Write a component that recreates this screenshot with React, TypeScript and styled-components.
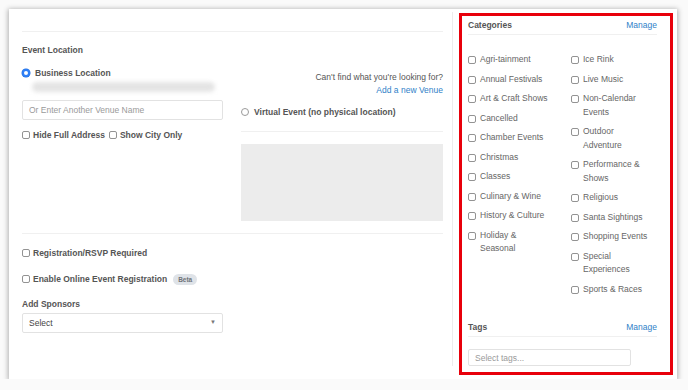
import styled, { createGlobalStyle } from 'styled-components';

const GlobalStyle = createGlobalStyle`
  html, body {
    margin: 0;
    padding: 0;
    background: #fafafa;
  }
  body {
    font-family: "Liberation Sans", Arial, Helvetica, sans-serif;
    font-size: 8.5px;
    color: #555;
  }
  * {
    box-sizing: border-box;
  }
`;

const Card = styled.div`
  margin: 9px 0 0 9px;
  width: 668px;
  height: 370px;
  background: #fff;
  box-shadow: 0 1px 5px 1px rgba(0, 0, 0, 0.3);
  display: flex;
`;

const LeftCol = styled.div`
  width: 444px;
  margin: 3px 0 13px;
  padding: 19px 9px 0 13px;
  border-right: 1px solid #ececec;
`;

const RightCol = styled.div`
  flex: 1;
  padding: 4px 4px 4px 6px;
  display: flex;
`;

const Highlight = styled.div`
  flex: 1;
  border: 3px solid #e8000b;
  padding: 0 13px 0 6px;
  display: flex;
  flex-direction: column;
`;

const Divider = styled.div<{ $top?: number }>`
  height: 1px;
  background: #f0f0f0;
  margin-top: ${(p) => p.$top ?? 0}px;
`;

const Heading = styled.div<{ $top?: number }>`
  margin-top: ${(p) => p.$top ?? 0}px;
  line-height: 12px;
  font-weight: bold;
  color: #555;
`;

const Split = styled.div`
  display: grid;
  grid-template-columns: 201px 202px;
  column-gap: 18px;
`;

const Stack = styled.div`
  display: flex;
  flex-direction: column;
`;

const OptionRow = styled.label<{ $top?: number; $gap?: number }>`
  display: flex;
  align-items: center;
  gap: ${(p) => p.$gap ?? 3}px;
  margin-top: ${(p) => p.$top ?? 0}px;
  line-height: 12px;
  font-weight: bold;
  color: #555;
`;

const Radio = styled.input.attrs({ type: 'radio' })`
  appearance: none;
  margin: 0;
  width: 8px;
  height: 8px;
  border-radius: 50%;
  border: 1px solid #9a9a9a;
  background: #fff;
  flex-shrink: 0;

  &:checked {
    border: 2.5px solid #2f7ff5;
    background: #fff;
    box-shadow: 0 0 0 0.5px #1f6fe0;
  }
`;

const Check = styled.input.attrs({ type: 'checkbox' })`
  appearance: none;
  margin: 0;
  width: 8px;
  height: 8px;
  border-radius: 2px;
  border: 1px solid #939393;
  background: #fff;
  flex-shrink: 0;
`;

const BlurredAddress = styled.div`
  margin: 3px 0 0 10px;
  width: 183px;
  height: 10px;
  background: #e4e4e4;
  border-radius: 5px;
  filter: blur(2px);
`;

const TextField = styled.div<{ $top?: number; $width?: string; $height: number }>`
  margin-top: ${(p) => p.$top ?? 0}px;
  width: ${(p) => p.$width ?? '100%'};
  height: ${(p) => p.$height}px;
  border: 1px solid #e2e2e2;
  border-radius: 2px;
  padding: 0 6px;
  display: flex;
  align-items: center;
  justify-content: space-between;
  color: #9a9a9a;
  background: #fff;
`;

const Value = styled.span`
  color: #444;
`;

const Caret = styled.span`
  font-size: 6px;
  color: #777;
  margin-top: -3px;
`;

const Hint = styled.div<{ $top?: number }>`
  margin-top: ${(p) => p.$top ?? 0}px;
  line-height: 12px;
  text-align: right;
  color: #555;
`;

const Link = styled.a`
  color: #2f7fc8;
  text-decoration: none;
  cursor: pointer;
`;

const MapBox = styled.div`
  margin-top: 12px;
  height: 77px;
  background: #ececec;
`;

const Badge = styled.span`
  margin-left: 3px;
  padding: 0 5px;
  height: 11px;
  line-height: 11px;
  border-radius: 6px;
  background: #dfe3e8;
  color: #6f7378;
  font-size: 6.5px;
  font-weight: bold;
`;

const PanelHeader = styled.div<{ $top?: number }>`
  margin-top: ${(p) => p.$top ?? 0}px;
  padding: 3px 0;
  line-height: 12px;
  display: flex;
  justify-content: space-between;
  border-bottom: 1px solid #f0f0f0;
`;

const PanelTitle = styled.span`
  font-weight: bold;
  color: #555;
`;

const CategoryGrid = styled.div`
  margin-top: 18px;
  display: grid;
  grid-template-columns: 103px 1fr;
  align-items: start;
`;

const CategoryList = styled.div`
  display: flex;
  flex-direction: column;
  gap: 6px;
`;

const CategoryItem = styled.label`
  display: flex;
  align-items: flex-start;
  gap: 4px;
  line-height: 13.5px;
  color: #666;
  white-space: pre-line;

  & > input {
    margin-top: 3px;
  }
`;

const colOne = [
  'Agri-tainment',
  'Annual Festivals',
  'Art & Craft Shows',
  'Cancelled',
  'Chamber Events',
  'Christmas',
  'Classes',
  'Culinary & Wine',
  'History & Culture',
  'Holiday &\nSeasonal',
];

const colTwo = [
  'Ice Rink',
  'Live Music',
  'Non-Calendar\nEvents',
  'Outdoor\nAdventure',
  'Performance &\nShows',
  'Religious',
  'Santa Sightings',
  'Shopping Events',
  'Special\nExperiences',
  'Sports & Races',
];

function Categories({ items }: { items: string[] }) {
  return (
    <CategoryList>
      {items.map((label) => (
        <CategoryItem key={label}>
          <Check />
          <span>{label}</span>
        </CategoryItem>
      ))}
    </CategoryList>
  );
}

export default function App() {
  return (
    <>
      <GlobalStyle />
      <Card>
        <LeftCol>
          <Divider />
          <Heading $top={12}>Event Location</Heading>

          <Split>
            <Stack>
              <OptionRow $top={11} $gap={5}>
                <Radio name="loc" defaultChecked />
                Business Location
              </OptionRow>
              <BlurredAddress />
              <TextField $top={8} $height={20}>
                Or Enter Another Venue Name
              </TextField>
              <OptionRow $top={9}>
                <Check />
                Hide Full Address
                <Check style={{ marginLeft: 1 }} />
                Show City Only
              </OptionRow>
            </Stack>

            <Stack>
              <Hint $top={15}>Can't find what you're looking for?</Hint>
              <Hint $top={1}>
                <Link>Add a new Venue</Link>
              </Hint>
              <OptionRow $top={10} $gap={5}>
                <Radio name="loc" />
                Virtual Event (no physical location)
              </OptionRow>
              <Divider $top={13} />
              <MapBox />
            </Stack>
          </Split>

          <Divider $top={12} />
          <OptionRow $top={13}>
            <Check />
            Registration/RSVP Required
          </OptionRow>
          <OptionRow $top={14}>
            <Check />
            Enable Online Event Registration
            <Badge>Beta</Badge>
          </OptionRow>
          <Heading $top={13}>Add Sponsors</Heading>
          <TextField $top={3} $height={20} $width="201px">
            <Value>Select</Value>
            <Caret>▼</Caret>
          </TextField>
        </LeftCol>

        <RightCol>
          <Highlight>
            <PanelHeader>
              <PanelTitle>Categories</PanelTitle>
              <Link>Manage</Link>
            </PanelHeader>
            <CategoryGrid>
              <Categories items={colOne} />
              <Categories items={colTwo} />
            </CategoryGrid>
            <PanelHeader $top={22}>
              <PanelTitle>Tags</PanelTitle>
              <Link>Manage</Link>
            </PanelHeader>
            <TextField $top={12} $height={17} $width="163px">
              Select tags...
            </TextField>
          </Highlight>
        </RightCol>
      </Card>
    </>
  );
}
